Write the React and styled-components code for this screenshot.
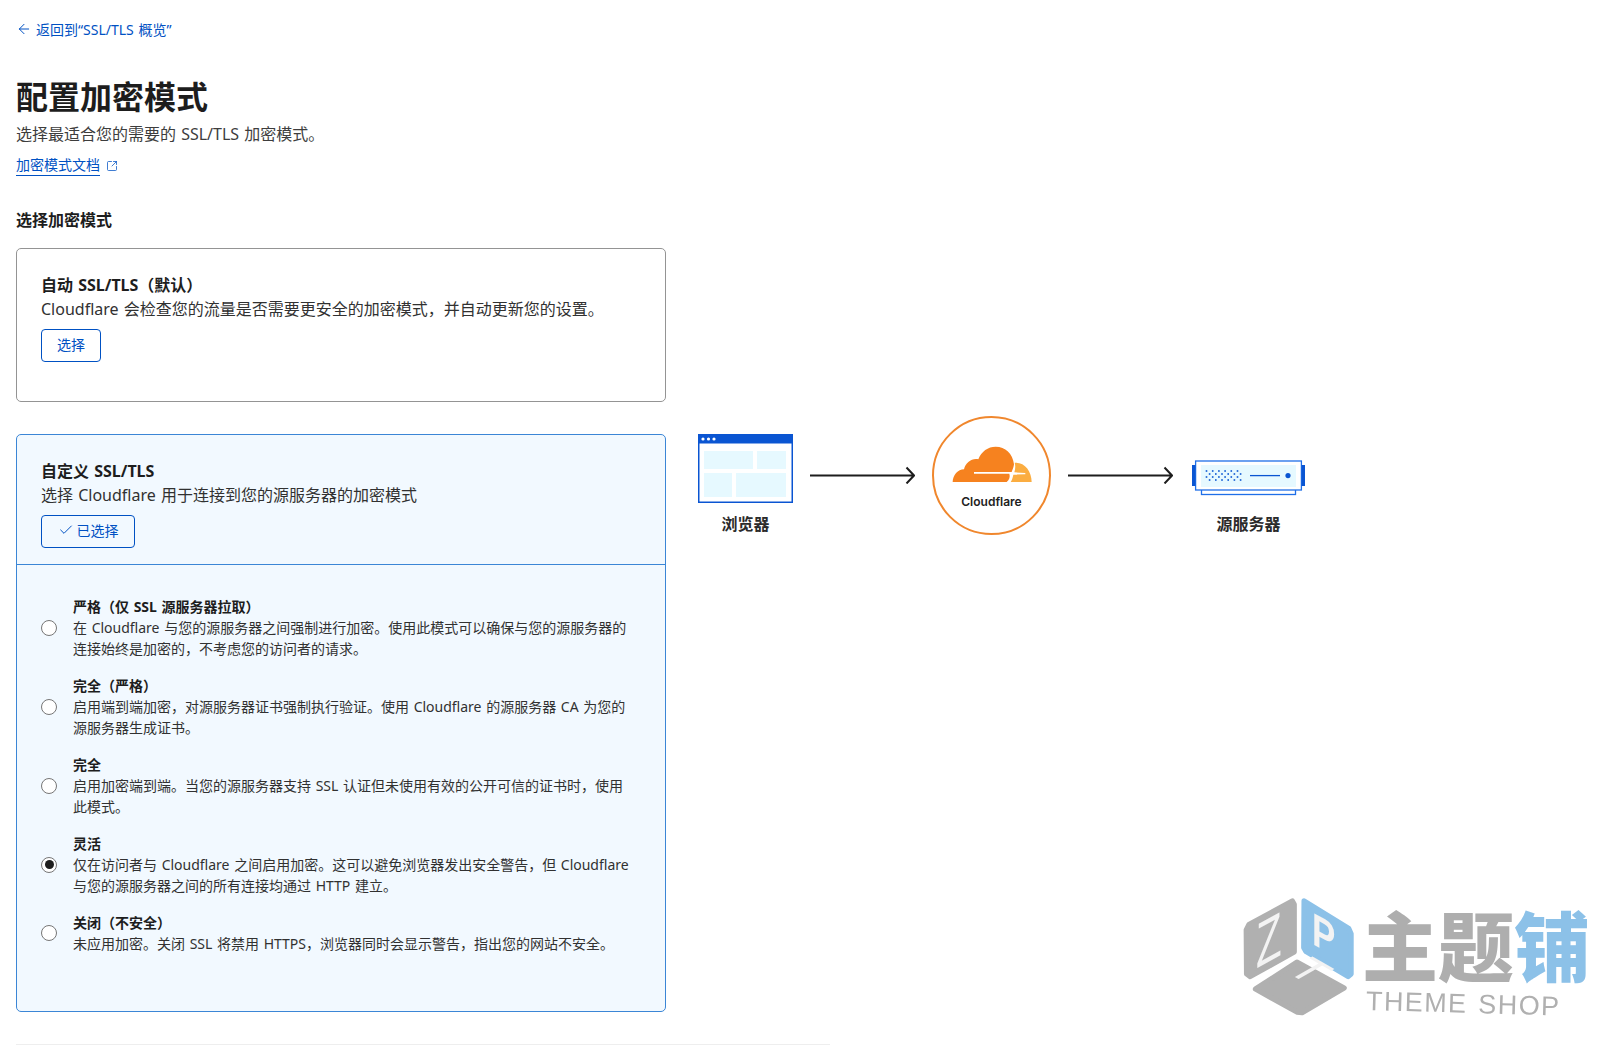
import { useState } from 'react';
import styled, { createGlobalStyle } from 'styled-components';
import { ArrowLeft, Check, SquareArrowOutUpRight } from 'lucide-react';

const GlobalStyle = createGlobalStyle`
  html, body {
    margin: 0;
    padding: 0;
    background: #fff;
    overflow: hidden;
  }
  body {
    font-family: "Noto Sans", "Noto Sans CJK SC", sans-serif;
    color: #313131;
    word-spacing: 1px;
  }
`;

const Page = styled.div`
  position: relative;
  display: flex;
  width: 1615px;
  height: 1051px;
  box-sizing: border-box;
  padding: 18px 16px 0;
  overflow: hidden;
`;

const LeftColumn = styled.main`
  width: 650px;
  flex-shrink: 0;
`;

const BackLink = styled.a`
  display: flex;
  align-items: center;
  gap: 4px;
  height: 21px;
  font-size: 14px;
  color: #0051c3;
  text-decoration: none;
`;

const Title = styled.h1`
  margin: 38px 0 5px;
  font-size: 32px;
  line-height: 40px;
  font-weight: 700;
  color: #1d1d1d;
`;

const Subtitle = styled.p`
  margin: 0;
  font-size: 16px;
  line-height: 24px;
  color: #3d3d3d;
`;

const DocsLine = styled.div`
  display: flex;
  align-items: center;
  gap: 6px;
  margin-top: 9px;
  height: 21px;
  color: #0051c3;
`;

const DocsLink = styled.a`
  font-size: 14px;
  line-height: 20px;
  color: #0051c3;
  text-decoration: none;
  border-bottom: 1px solid #0051c3;
`;

const SectionTitle = styled.h2`
  margin: 32px 0 16px;
  font-size: 16px;
  line-height: 24px;
  font-weight: 600;
  color: #1d1d1d;
`;

const Card = styled.section`
  box-sizing: border-box;
  border: 1px solid ${({ $active }) => ($active ? '#3b86d6' : '#949494')};
  border-radius: 5px;
  background: ${({ $active }) => ($active ? '#f2f9ff' : '#fff')};
  margin-bottom: 32px;
`;

const CardHead = styled.div`
  padding: 24px 24px ${({ $active }) => ($active ? '16px' : '39px')};
  border-bottom: ${({ $active }) => ($active ? '1px solid #3b86d6' : 'none')};
`;

const CardTitle = styled.h3`
  margin: 0;
  font-size: 16px;
  line-height: 24px;
  font-weight: 700;
  color: #1d1d1d;
`;

const CardText = styled.p`
  margin: 0 0 8px;
  font-size: 16px;
  line-height: 24px;
  color: #313131;
`;

const SelectButton = styled.button`
  display: flex;
  align-items: center;
  justify-content: center;
  gap: 3px;
  box-sizing: border-box;
  width: ${({ $selected }) => ($selected ? '94px' : '60px')};
  height: 33px;
  padding: 0 0 3px;
  border: 1px solid #0051c3;
  border-radius: 4px;
  background: ${({ $selected }) => ($selected ? 'transparent' : '#fff')};
  font-family: inherit;
  font-size: 14px;
  color: #0051c3;
  cursor: pointer;
`;

const OptionList = styled.div`
  display: flex;
  flex-direction: column;
  gap: 16px;
  padding: 31px 24px 57px;
`;

const Option = styled.label`
  display: flex;
  align-items: center;
  gap: 16px;
  cursor: pointer;
`;

const Radio = styled.input`
  appearance: none;
  flex-shrink: 0;
  position: relative;
  width: 16px;
  height: 16px;
  margin: 0;
  border: 1px solid #767676;
  border-radius: 50%;
  background: #fff;

  &:checked::after {
    content: '';
    position: absolute;
    inset: 2.5px;
    border-radius: 50%;
    background: #1d1d1d;
  }
`;

const OptionBody = styled.div`
  max-width: 558px;
  font-size: 14px;
  line-height: 21px;
  color: #313131;
`;

const OptionTitle = styled.div`
  font-weight: 700;
  color: #1d1d1d;
`;

const BottomRule = styled.hr`
  width: 814px;
  height: 1px;
  margin: 0;
  border: none;
  background: #eeeeee;
`;

const Diagram = styled.aside`
  display: flex;
  align-items: flex-start;
  gap: 17px;
  margin: 398px 0 0 32px;
`;

const Node = styled.figure`
  display: flex;
  flex-direction: column;
  align-items: center;
  margin: ${({ $top }) => $top}px 0 0 ${({ $left }) => $left || 0}px;
`;

const NodeLabel = styled.figcaption`
  margin-top: ${({ $gap }) => $gap}px;
  font-size: 16px;
  line-height: 24px;
  font-weight: 600;
  color: #2b2b2b;
`;

const FlowArrow = styled.svg`
  width: 105px;
  height: 18px;
  margin-top: 50px;
  flex-shrink: 0;
`;

const CloudCircle = styled.div`
  display: flex;
  flex-direction: column;
  align-items: center;
  box-sizing: border-box;
  width: 119px;
  height: 119px;
  padding-top: 28px;
  border: 2px solid #f0872d;
  border-radius: 50%;
  flex-shrink: 0;
`;

const CloudName = styled.span`
  margin-top: 12px;
  font-family: Inter, "Liberation Sans", sans-serif;
  font-size: 12px;
  line-height: 16px;
  font-weight: 600;
  color: #222;
  word-spacing: 0;
`;

const Watermark = styled.div`
  position: absolute;
  left: 1241px;
  top: 894px;
  display: flex;
  gap: 6px;
  filter: blur(0.7px);
  pointer-events: none;
`;

const WatermarkText = styled.div`
  display: flex;
  flex-direction: column;
  padding-top: 8px;
`;

const WatermarkName = styled.div`
  font-family: "Noto Sans CJK SC", sans-serif;
  font-size: 76px;
  line-height: 82px;
  font-weight: 900;
  color: #aeaeae;
  white-space: nowrap;
`;

const WatermarkAccent = styled.span`
  color: #8cc1e8;
`;

const WatermarkSub = styled.div`
  margin: 2px 0 0 4px;
  font-family: "Liberation Sans", sans-serif;
  font-size: 27px;
  line-height: 30px;
  letter-spacing: 1.4px;
  word-spacing: 2px;
  color: #b0b0b0;
  white-space: nowrap;
  transform: rotate(1.6deg);
  transform-origin: left center;
`;

const options = [
  {
    id: 'strict-pull',
    title: '严格（仅 SSL 源服务器拉取）',
    text: '在 Cloudflare 与您的源服务器之间强制进行加密。使用此模式可以确保与您的源服务器的连接始终是加密的，不考虑您的访问者的请求。',
  },
  {
    id: 'full-strict',
    title: '完全（严格）',
    text: '启用端到端加密，对源服务器证书强制执行验证。使用 Cloudflare 的源服务器 CA 为您的源服务器生成证书。',
  },
  {
    id: 'full',
    title: '完全',
    text: '启用加密端到端。当您的源服务器支持 SSL 认证但未使用有效的公开可信的证书时，使用此模式。',
  },
  {
    id: 'flexible',
    title: '灵活',
    text: '仅在访问者与 Cloudflare 之间启用加密。这可以避免浏览器发出安全警告，但 Cloudflare 与您的源服务器之间的所有连接均通过 HTTP 建立。',
  },
  {
    id: 'off',
    title: '关闭（不安全）',
    text: '未应用加密。关闭 SSL 将禁用 HTTPS，浏览器同时会显示警告，指出您的网站不安全。',
  },
];

const BrowserIcon = () => (
  <svg width="95" height="69" viewBox="0 0 95 69">
    <rect x="0.75" y="0.75" width="93.5" height="67.5" fill="#fff" stroke="#0a55d2" strokeWidth="1.5" />
    <rect x="0" y="0" width="95" height="9.5" fill="#0a55d2" />
    <circle cx="5" cy="5" r="1.6" fill="#fff" />
    <circle cx="10.5" cy="5" r="1.6" fill="#fff" />
    <circle cx="16" cy="5" r="1.6" fill="#fff" />
    <rect x="6" y="17" width="49" height="18" fill="#e6f9ff" />
    <rect x="59" y="17" width="29" height="18" fill="#e6f9ff" />
    <rect x="6" y="39" width="28" height="24" fill="#e6f9ff" />
    <rect x="38" y="39" width="50" height="24" fill="#e6f9ff" />
  </svg>
);

const Arrow = () => (
  <FlowArrow viewBox="0 0 105 18">
    <path d="M0 9.5H104M96.5 1.5L104 9.5L96.5 17.5" fill="none" stroke="#1d1d1d" strokeWidth="2" />
  </FlowArrow>
);

const CloudLogo = () => (
  <svg width="80" height="36" viewBox="64 90 240 108">
    <path
      d="M66 198C66 178 82 160 100 160C104 140 125 125 143 130C152 106 172 92 195 92C224 92 246 112 250 145C249 153 246 161 243 168L130 168L130 173L236 173C239 182 236 192 228 198Z"
      fill="#f6821f"
    />
    <path
      d="M252 140C282 138 303 165 303 198L240 198C245 190 246 184 248 176L284 175L284 171L251 169C254 160 255 150 252 140Z"
      fill="#fbad41"
    />
  </svg>
);

const serverDots = [];
for (let row = 0; row < 4; row++) {
  for (let col = 0; col < 12; col++) {
    if ((row + col) % 2 === 0) serverDots.push([14.5 + col * 3.1, 11 + row * 3]);
  }
}

const ServerIcon = () => (
  <svg width="113" height="36" viewBox="0 0 113 36">
    <rect x="9.5" y="28" width="94" height="6.5" fill="#fff" stroke="#1f6fe8" strokeWidth="1.3" />
    <rect x="3.6" y="1" width="105.8" height="29" fill="#fff" stroke="#1f6fe8" strokeWidth="1.3" />
    <rect x="9" y="5" width="95" height="22" fill="#e6f9ff" />
    <rect x="0" y="5" width="3.4" height="21" fill="#0a55d2" />
    <rect x="109.6" y="5" width="3.4" height="21" fill="#0a55d2" />
    {serverDots.map(([cx, cy]) => (
      <rect key={`${cx}-${cy}`} x={cx - 0.8} y={cy - 0.8} width="1.6" height="1.6" fill="#0a55d2" />
    ))}
    <path d="M58 15.6H88" stroke="#0a55d2" strokeWidth="1.3" />
    <circle cx="96" cy="15.6" r="2.6" fill="#0a55d2" />
  </svg>
);

const WatermarkLogo = () => (
  <svg width="115" height="125" viewBox="62 45 350 372">
    <g strokeWidth="16" strokeLinejoin="round">
      <path d="M218 62L86 134L78 150L79 284L90 292L224 217V72Z" fill="#b0b0b0" stroke="#b0b0b0" />
      <path d="M254 62L390 146L397 162V284L388 292L260 216L253 204Z" fill="#8cc1e8" stroke="#8cc1e8" />
      <path d="M232 248L376 327L248 402L232 400L106 330Z" fill="#b0b0b0" stroke="#b0b0b0" />
    </g>
    <g fontFamily="Liberation Sans, sans-serif" fill="#f3f3f3">
      <text transform="matrix(1 -0.55 0 1.5 108 268)" fontSize="128">Z</text>
      <text transform="matrix(0.95 0.52 0 1.25 278 192)" fontSize="112" fontWeight="700">P</text>
      <text transform="matrix(1.05 0.6 -1.05 0.6 196 276)" fontSize="112">T</text>
    </g>
  </svg>
);

export default function App() {
  const [mode, setMode] = useState('flexible');

  return (
    <>
      <GlobalStyle />
      <Page>
        <LeftColumn>
          <BackLink href="#">
            <ArrowLeft size={16} strokeWidth={1.5} />
            返回到“SSL/TLS 概览”
          </BackLink>
          <Title>配置加密模式</Title>
          <Subtitle>选择最适合您的需要的 SSL/TLS 加密模式。</Subtitle>
          <DocsLine>
            <DocsLink href="#">加密模式文档</DocsLink>
            <SquareArrowOutUpRight size={12} strokeWidth={1.5} />
          </DocsLine>
          <SectionTitle>选择加密模式</SectionTitle>

          <Card>
            <CardHead>
              <CardTitle>自动 SSL/TLS（默认）</CardTitle>
              <CardText>Cloudflare 会检查您的流量是否需要更安全的加密模式，并自动更新您的设置。</CardText>
              <SelectButton>选择</SelectButton>
            </CardHead>
          </Card>

          <Card $active>
            <CardHead $active>
              <CardTitle>自定义 SSL/TLS</CardTitle>
              <CardText>选择 Cloudflare 用于连接到您的源服务器的加密模式</CardText>
              <SelectButton $selected>
                <Check size={16} strokeWidth={1.5} />
                已选择
              </SelectButton>
            </CardHead>
            <OptionList>
              {options.map((option) => (
                <Option key={option.id}>
                  <Radio
                    type="radio"
                    name="mode"
                    checked={mode === option.id}
                    onChange={() => setMode(option.id)}
                  />
                  <OptionBody>
                    <OptionTitle>{option.title}</OptionTitle>
                    {option.text}
                  </OptionBody>
                </Option>
              ))}
            </OptionList>
          </Card>
          <BottomRule />
        </LeftColumn>

        <Diagram>
          <Node $top={18}>
            <BrowserIcon />
            <NodeLabel $gap={9}>浏览器</NodeLabel>
          </Node>
          <Arrow />
          <CloudCircle>
            <CloudLogo />
            <CloudName>Cloudflare</CloudName>
          </CloudCircle>
          <Arrow />
          <Node $top={44} $left={2}>
            <ServerIcon />
            <NodeLabel $gap={16}>源服务器</NodeLabel>
          </Node>
        </Diagram>

        <Watermark>
          <WatermarkLogo />
          <WatermarkText>
            <WatermarkName>
              主题<WatermarkAccent>铺</WatermarkAccent>
            </WatermarkName>
            <WatermarkSub>THEME SHOP</WatermarkSub>
          </WatermarkText>
        </Watermark>
      </Page>
    </>
  );
}
